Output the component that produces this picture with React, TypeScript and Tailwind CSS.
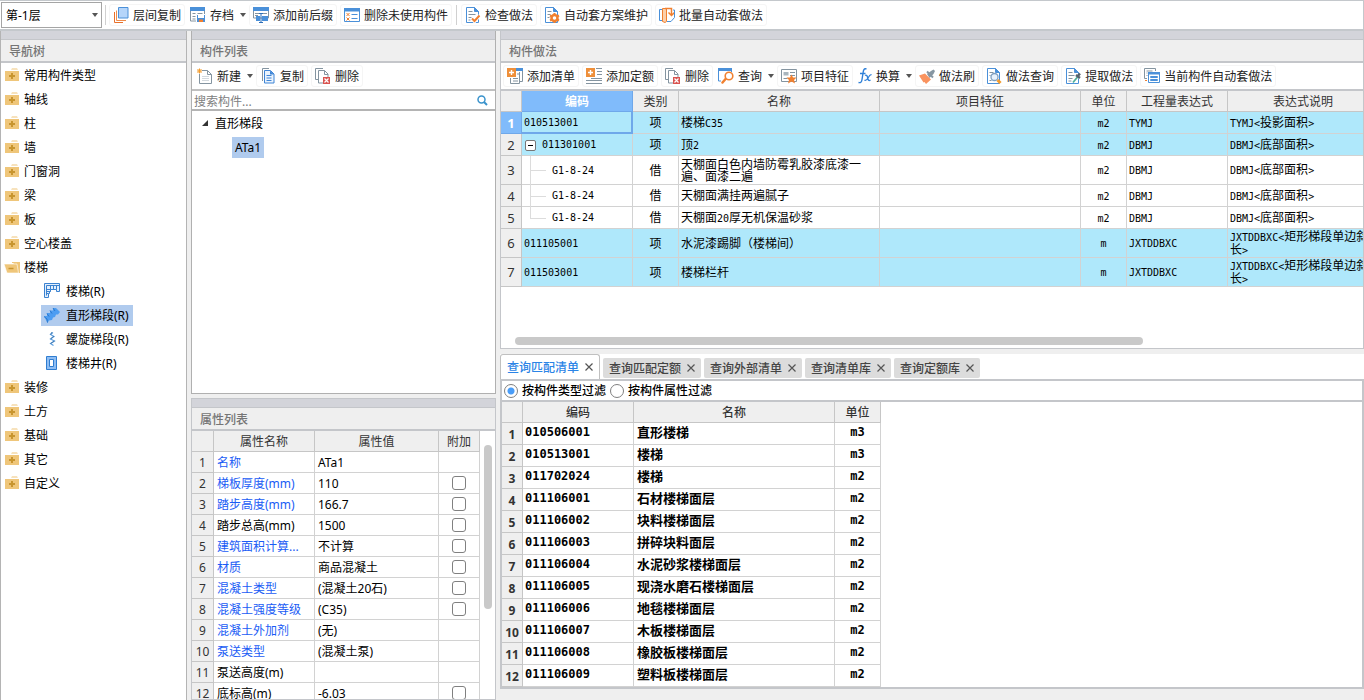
import React, { ReactNode, useState } from 'react'

interface IconProps {
  children: ReactNode
  width?: number
}

const Icon = ({ children, width = 16 }: IconProps) => (
  <svg width={width} height="16" viewBox={`0 0 ${width} 16`} fill="none" className="shrink-0" aria-hidden="true">
    {children}
  </svg>
)

const BLUE = '#4a90d9'
const SLATE = '#8494a0'
const ORANGE = '#f08030'

/* shared icon parts */
const Page = ({ color = BLUE }: { color?: string }) => (
  <>
    <path d="M1.5.5h8l4 4v11h-12z" fill="#fff" stroke={color} />
    <path d="M9.5.5v4h4z" fill={color} stroke={color} />
  </>
)

const RedCross = () => (
  <>
    <path d="M8 9h7v7H8z" fill="#d9534f" />
    <path d="M9.5 10.5l4 4m0-4l-4 4" stroke="#fff" strokeWidth="1.2" />
  </>
)

const PlusBox = () => (
  <>
    <path d="M0 0h9v9H0z" fill="#ee8f3a" />
    <path d="M4.5 2v5M2 4.5h5" stroke="#fff" strokeWidth="1.4" />
  </>
)

const LayerCopyIcon = () => (
  <Icon>
    <path d="M1.5 5v10.5H10" stroke="#e8702a" />
    <path d="M3.5 3.5v10H13" stroke="#ee8c4c" />
    <path d="M5.500 .5h9.500v10.500h-9.500z" fill="#b5d5fa" stroke={BLUE} />
  </Icon>
)

const ArchiveIcon = () => (
  <Icon>
    <path d="M.5 1.500h14V14H.5z" fill="#fff" stroke={SLATE} />
    <path d="M0 0h15v4H0z" fill={BLUE} />
    <path d="M2.500 6.500h3m2 0h5M2.500 9.500h3M2.500 12h3" stroke={SLATE} />
    <path d="M6.500 7.500h9V15.500h-9z" fill={BLUE} stroke="#fff" />
    <path d="M8 8h6v3H8z" fill="#fff" />
    <path d="M9 12.500h4V15H9z" fill="#f08030" />
  </Icon>
)

const SuffixIcon = () => (
  <Icon>
    <path d="M.5 1.500h15V11H.5z" fill="#fff" stroke={SLATE} />
    <path d="M0 0h16v4H0z" fill={BLUE} />
    <path d="M2 6.500h4M2 8.500h3m5-2h4" stroke={SLATE} />
    <path d="M3 9h4v5H3zm6 0h6v5H9z" fill={BLUE} />
    <path d="M8 6.500v9M6 6.500h4M6 15.500h4" stroke="#2d6fb8" />
  </Icon>
)

const DeleteUnusedIcon = () => (
  <Icon>
    <path d="M.5 1.500h15v13H.5z" fill="#fff" stroke={BLUE} />
    <path d="M0 1h16v3.500H0z" fill={BLUE} />
    <path d="M7.500 7.500h6m-6 4h6" stroke={BLUE} />
    <path d="M2.500 6l3 3m0-3l-3 3m0 1.500l3 3m0-3l-3 3" stroke={ORANGE} />
  </Icon>
)

const CheckIcon = () => (
  <Icon>
    <Page />
    <path d="M3.500 4.500h4m-4 3h7m-7 3h3m-3 2.500h2" stroke={SLATE} />
    <path d="M7 11.500l2.500 2.500L14.500 8.500" stroke="#fff" strokeWidth="4" />
    <path d="M7 11.500l2.500 2.500L14.500 8.500" stroke={ORANGE} strokeWidth="2" />
  </Icon>
)

const GearPageIcon = () => (
  <Icon>
    <Page />
    <path d="M3.500 4.500h4m-4 3h3m-3 3h2" stroke={SLATE} />
    <circle cx="10.500" cy="11" r="3" fill="#fff" stroke={ORANGE} strokeWidth="2.500" />
    <path d="M10.500 6v2m0 6v2M6 8.500l2 1m5 3l2 1m0-5l-2 1m-5 3l-2 1" stroke={ORANGE} strokeWidth="2" />
  </Icon>
)

const BatchIcon = () => (
  <Icon>
    <path d="M3 2.500H.5v11H3" stroke={BLUE} />
    <path d="M3.500 1.500h4v13l-1.500 1-2.500-1z" fill="#fbd0ab" stroke={ORANGE} />
    <path d="M6 1.500h6.500v6M9.500 5.500l3 3 3-3" stroke={ORANGE} strokeWidth="1.500" />
    <path d="M8 14.500h4l3.500-4V3H14" stroke={BLUE} />
  </Icon>
)

const NewIcon = () => (
  <Icon>
    <path d="M2.500 2.500h8l4 4v9h-12z" fill="#fff" stroke={SLATE} />
    <path d="M10.500 2.500v4h4" stroke={SLATE} />
    <path d="M5 8.500h7M5 10.500h7M5 12.500h7" stroke="#d3d9de" />
    <path d="M0 1h5v5H0z" fill="#fff" />
    <path d="M2.500 .5v5M0 3h5M.5 1l4 4m0-4l-4 4" stroke="#f39b2d" />
  </Icon>
)

const CopyIcon = () => (
  <Icon>
    <path d="M9 .5H2.500v12.500" stroke={SLATE} />
    <path d="M4.500 2.500h6l3.500 3.500v9H4.500z" fill="#eaf3fd" stroke="#3f85d6" />
    <path d="M10 2.500v4h4z" fill="#3f85d6" />
    <path d="M6.500 7.500h5m-5 2.500h5m-5 2.500h5" stroke="#3f85d6" />
  </Icon>
)

const DeleteIcon = () => (
  <Icon>
    <path d="M8 .5H.5v11H3" stroke={SLATE} />
    <path d="M3.500 2.500h6l3.500 3.500v9H3.500z" fill="#fff" stroke={SLATE} />
    <path d="M9.500 2.500v4H13" stroke={SLATE} />
    <RedCross />
  </Icon>
)

const AddListIcon = () => (
  <Icon>
    <path d="M10 1.500h5.500v12H13M3.500 10v5.500h9V4" fill="#fff" stroke={SLATE} />
    <path d="M9 0h7v3H9z" fill={BLUE} />
    <path d="M10 6h2m-6 4.500h5m-5 2.500h5" stroke={SLATE} />
    <PlusBox />
  </Icon>
)

const AddQuotaIcon = () => (
  <Icon>
    <path d="M10 .5h6m-5 3h5m-5 3h5M5 10.500h11M0 12.500h16M0 15.500h16" stroke={SLATE} />
    <PlusBox />
  </Icon>
)

const QueryIcon = () => (
  <Icon>
    <path d="M.5 1v12H3M13.500 1v3" stroke={BLUE} />
    <path d="M0 0h14v3H0z" fill={BLUE} />
    <path d="M8 10.500L4.500 14.500" stroke={ORANGE} strokeWidth="2.500" strokeLinecap="round" />
    <circle cx="11" cy="8" r="3.800" fill="#fff" stroke={ORANGE} strokeWidth="1.600" />
  </Icon>
)

const FeatureIcon = () => (
  <Icon>
    <path d="M.5 1.500h15v12H.5z" fill="#fff" stroke={SLATE} />
    <path d="M2.500 4h5v3.500h-5z" fill="#a9b5bd" />
    <path d="M9 4.500h5m-5 3h5M2.500 10.500h4" stroke={SLATE} />
    <path d="M10.500 6.500l1.500 3h3.500l-2.500 2.500 1 3.500-3.500-2-3.500 2 1-3.500L5.500 9.500H9z" fill={ORANGE} />
  </Icon>
)

const FxIcon = () => (
  <Icon width={14}>
    <path d="M8.500 1C6.500 0 5.500 1.500 5.200 4L4 11.500c-.4 2.800-1.500 3.500-3.500 3M2 5.500h5.500" stroke="#2f80d8" strokeWidth="1.400" />
    <path d="M7 7.500c1.500-1 2.200.2 2.700 2.500s1 3.200 2.800 2M13.500 6.800c-1.500-.6-2.700 1.700-3.500 3.200s-1.800 2.800-3.500 2.200" stroke="#2f80d8" strokeWidth="1.300" />
  </Icon>
)

const BrushIcon = () => (
  <Icon>
    <path d="M8 6l4-3 2.500-1.500L16 3l-1.500 3-4 4z" fill="#8696a2" />
    <path d="M8 3.500l6 6" stroke="#8696a2" strokeWidth="2" />
    <path d="M0 7.500L6 5.500l6 6-5 4.500-1.500-2-1 .5z" fill="#f9935f" />
  </Icon>
)

const PageSearchIcon = () => (
  <Icon>
    <Page />
    <path d="M3.500 4.500h4m-4 3h1m-1 5h2" stroke={SLATE} />
    <circle cx="8.500" cy="9" r="3.500" fill="#e8f2fd" stroke="#7f9fc0" strokeWidth="1.300" />
    <path d="M11.500 12l3 3" stroke="#f39b2d" strokeWidth="3" />
  </Icon>
)

const ExtractIcon = () => (
  <Icon>
    <Page />
    <path d="M3.500 4.500h4m-4 3h6m-6 3h4m-4 2.500h3" stroke={SLATE} />
    <path d="M8 14l5-6" stroke="#fff" strokeWidth="4" />
    <path d="M8 14.500l4.500-5.500" stroke="#4fb09a" strokeWidth="1.800" />
    <path d="M11 7l4 3M12.500 8.500L15 5.500" stroke="#55626d" strokeWidth="2.400" />
  </Icon>
)

const AutoIcon = () => (
  <Icon>
    <path d="M3 10.500H.5v-10h11V3" stroke={SLATE} />
    <path d="M2.500 3h6m-6 2h1m-1 2.500h1" stroke={SLATE} />
    <path d="M1 12.500h2" stroke={ORANGE} />
    <path d="M4.500 4.500h11v10h-11z" fill="#fff" stroke={BLUE} />
    <path d="M4 4h12v2.500H4z" fill={BLUE} />
    <path d="M6.500 8.500h7v1h-7zm0 3h7v1h-7z" fill="#fff" stroke={BLUE} />
  </Icon>
)

const FolderIcon = () => (
  <Icon>
    <path d="M7 2.500l1-1h5l1 1z" fill="#efc67a" />
    <path d="M1 4h14v10H1z" fill="#efc67a" />
    <path d="M8 6v6M5 9h6" stroke="#c8952f" strokeWidth="2" />
  </Icon>
)

const OpenFolderIcon = () => (
  <Icon>
    <path d="M9 3h7v11h-3z" fill="#efc67a" />
    <path d="M8 3.500h7.500V13" stroke="#efc67a" />
    <path d="M0 5h13l1.500 9H3z" fill="#efc67a" stroke="#fff" strokeWidth=".6" />
    <path d="M4.500 9.500h5" stroke="#c8952f" strokeWidth="1.500" />
  </Icon>
)

const StairIcon = () => (
  <Icon>
    <path d="M.5 14.500V.5h15v8h-3v-2h-6v2h-1v2h-1v4z" fill="#e3effc" stroke="#3b82d0" />
    <path d="M2.500 12.500v-10h13M6.500 2.500v4m3-4v4m3-4v4M2.500 6.500h4m-4 2h4m-4 2h2" stroke="#3b82d0" />
  </Icon>
)

const FlightIcon = () => (
  <Icon>
    <path d="M0 9h3V6h3V3.500h3V1h3l4 4-2 2.500h-2L11 10l-2 .5-1 2.500-3 .5L3.500 16z" fill="#4d9df2" />
    <path d="M3 6.500l2 3m1-6l2 3m1-5.500l2 3M0 9.500l3 2.500.5 3.500" stroke="#2b78cc" />
  </Icon>
)

const SpiralIcon = () => (
  <Icon>
    <path d="M9 1.500L6.500 3.500 10 5.500 6.500 8l4 2-4 2.500 3 2" stroke="#5fa0e0" strokeWidth="1.200" />
    <path d="M8 1l-1.500 2.500M10 5l-3.500 3M10.500 10l-4 2.500" stroke="#3b6f9f" strokeWidth=".8" />
  </Icon>
)

const WellIcon = () => (
  <Icon>
    <path d="M2.500 1.500h10v13h-10z" fill="#8ebdf3" stroke="#2f7dd1" />
    <path d="M5.500 4.500h4v7h-4z" fill="#fff" stroke="#2f7dd1" />
  </Icon>
)

const Caret = () => (
  <svg width="6" height="4" viewBox="0 0 6 4" className="block shrink-0" aria-hidden="true">
    <path d="M0 0h6L3 4z" fill="#555" />
  </svg>
)

const CloseMark = () => (
  <svg width="8" height="8" viewBox="0 0 8 8" className="shrink-0" aria-hidden="true">
    <path d="M.5.5l7 7m0-7l-7 7" stroke="#555" strokeWidth="1.200" />
  </svg>
)

interface ToolProps {
  icon: ReactNode
  label: string
  dropdown?: boolean
}

const Tool = ({ icon, label, dropdown }: ToolProps) => (
  <button
    type="button"
    className={
      dropdown
        ? 'flex h-[22px] items-center gap-1 whitespace-nowrap pl-0.5 text-[#222]'
        : 'flex h-[22px] items-center gap-1 whitespace-nowrap rounded-[3px] border border-[#f5f5f5] px-[3px] text-[#222]'
    }
  >
    {icon}
    <span className="pt-0.5">{label}</span>
    {dropdown && (
      <span className="pl-0.5">
        <Caret />
      </span>
    )}
  </button>
)

const PanelTitle = ({ children }: { children: string }) => (
  <>
    <div className="h-2 shrink-0 bg-[#d3d4da]" />
    <h2 className="h-6 shrink-0 border-b-2 border-t border-[#c4c6ca] bg-[#efefef] pl-2 font-medium leading-[23px] text-[#757575]">
      {children}
    </h2>
  </>
)

// Half-width characters sit on a grid half as wide as the Chinese ones
const GridText = ({ text, bold }: { text: string; bold?: boolean }) => (
  <>
    {text.split(/([\x20-\x7e]+)/).map((part, i) =>
      i % 2 ? (
        <span key={i} className={bold ? 'font-[DejaVu_Sans_Mono] text-[12px]' : 'font-[DejaVu_Sans_Mono] text-[10px]'}>
          {part}
        </span>
      ) : (
        part
      )
    )}
  </>
)

const folders = ['常用构件类型', '轴线', '柱', '墙', '门窗洞', '梁', '板', '空心楼盖', '楼梯', '装修', '土方', '基础', '其它', '自定义']

const stairs = [
  { label: '楼梯(R)', icon: <StairIcon /> },
  { label: '直形梯段(R)', icon: <FlightIcon /> },
  { label: '螺旋梯段(R)', icon: <SpiralIcon /> },
  { label: '楼梯井(R)', icon: <WellIcon /> },
]

const properties = [
  { name: '名称', value: 'ATa1', link: true, check: false },
  { name: '梯板厚度(mm)', value: '110', link: true, check: true },
  { name: '踏步高度(mm)', value: '166.7', link: true, check: true },
  { name: '踏步总高(mm)', value: '1500', link: false, check: true },
  { name: '建筑面积计算...', value: '不计算', link: true, check: true },
  { name: '材质', value: '商品混凝土', link: true, check: true },
  { name: '混凝土类型', value: '(混凝土20石)', link: true, check: true },
  { name: '混凝土强度等级', value: '(C35)', link: true, check: true },
  { name: '混凝土外加剂', value: '(无)', link: true, check: false },
  { name: '泵送类型', value: '(混凝土泵)', link: true, check: false },
  { name: '泵送高度(m)', value: '', link: false, check: false },
  { name: '底标高(m)', value: '-6.03', link: false, check: true },
]

const methods = [
  { code: '010513001', kind: '项', name: '楼梯C35', unit: 'm2', expr: 'TYMJ', note: 'TYMJ<投影面积>' },
  { code: '011301001', kind: '项', name: '顶2', unit: 'm2', expr: 'DBMJ', note: 'DBMJ<底部面积>' },
  { code: 'G1-8-24', kind: '借', name: '天棚面白色内墙防霉乳胶漆底漆一遍、面漆二遍', unit: 'm2', expr: 'DBMJ', note: 'DBMJ<底部面积>', tall: true },
  { code: 'G1-8-24', kind: '借', name: '天棚面满挂两遍腻子', unit: 'm2', expr: 'DBMJ', note: 'DBMJ<底部面积>' },
  { code: 'G1-8-24', kind: '借', name: '天棚面20厚无机保温砂浆', unit: 'm2', expr: 'DBMJ', note: 'DBMJ<底部面积>' },
  { code: '011105001', kind: '项', name: '水泥漆踢脚（楼梯间）', unit: 'm', expr: 'JXTDDBXC', note: 'JXTDDBXC<矩形梯段单边斜长>', tall: true },
  { code: '011503001', kind: '项', name: '楼梯栏杆', unit: 'm', expr: 'JXTDDBXC', note: 'JXTDDBXC<矩形梯段单边斜长>', tall: true },
]

const matches = [
  ['010506001', '直形楼梯', 'm3'],
  ['010513001', '楼梯', 'm3'],
  ['011702024', '楼梯', 'm2'],
  ['011106001', '石材楼梯面层', 'm2'],
  ['011106002', '块料楼梯面层', 'm2'],
  ['011106003', '拼碎块料面层', 'm2'],
  ['011106004', '水泥砂浆楼梯面层', 'm2'],
  ['011106005', '现浇水磨石楼梯面层', 'm2'],
  ['011106006', '地毯楼梯面层', 'm2'],
  ['011106007', '木板楼梯面层', 'm2'],
  ['011106008', '橡胶板楼梯面层', 'm2'],
  ['011106009', '塑料板楼梯面层', 'm2'],
]

const tabs = ['查询匹配清单', '查询匹配定额', '查询外部清单', '查询清单库', '查询定额库']

const TopBar = () => (
  <div className="flex h-[31px] shrink-0 items-center gap-[3px] border-b-2 border-r border-t border-[#c4c8cc] bg-white pl-px">
    <div className="relative">
      <select
        aria-label="楼层"
        className="block h-[26px] w-[101px] appearance-none border border-[#a5a5a5] bg-white pl-1 pt-0.5 text-black outline-none"
      >
        <option>第-1层</option>
      </select>
      <span className="pointer-events-none absolute right-1 top-1/2 -translate-y-1/2">
        <Caret />
      </span>
    </div>
    <span className="h-5 w-px bg-[#d0d0d0]" />
    <Tool icon={<LayerCopyIcon />} label="层间复制" />
    <Tool icon={<ArchiveIcon />} label="存档" dropdown />
    <Tool icon={<SuffixIcon />} label="添加前后缀" />
    <Tool icon={<DeleteUnusedIcon />} label="删除未使用构件" />
    <span className="mx-px h-5 w-px bg-[#d0d0d0]" />
    <Tool icon={<CheckIcon />} label="检查做法" />
    <Tool icon={<GearPageIcon />} label="自动套方案维护" />
    <Tool icon={<BatchIcon />} label="批量自动套做法" />
  </div>
)

const NavTree = () => {
  const [selected, setSelected] = useState('直形梯段(R)')

  return (
    <nav className="flex w-[187px] shrink-0 flex-col border-x border-[#b4b4b4] bg-white">
      <PanelTitle>导航树</PanelTitle>
      <ul>
        {folders.map((folder) => (
          <li key={folder}>
            <button type="button" className="flex h-6 items-center gap-1 pl-[3px] text-black">
              {folder === '楼梯' ? <OpenFolderIcon /> : <FolderIcon />}
              <span className="pt-0.5">{folder}</span>
            </button>
            {folder === '楼梯' && (
              <ul className="pl-10">
                {stairs.map((s) => (
                  <li key={s.label} className="flex h-6 items-center">
                    <button
                      type="button"
                      onClick={() => setSelected(s.label)}
                      className={
                        s.label === selected
                          ? 'flex h-[21px] items-center gap-1.5 bg-[#b0cbee] pl-[3px] pr-1 text-black'
                          : 'flex h-[21px] items-center gap-1.5 pl-[3px] pr-1 text-black'
                      }
                    >
                      {s.icon}
                      <span className="pt-0.5">{s.label}</span>
                    </button>
                  </li>
                ))}
              </ul>
            )}
          </li>
        ))}
      </ul>
    </nav>
  )
}

const ComponentList = () => (
  <section className="flex min-h-0 flex-[362_1_0%] flex-col border-x border-b border-[#b0b0b0] bg-white">
    <PanelTitle>构件列表</PanelTitle>
    <div className="flex h-7 shrink-0 items-center gap-[3px] border-b-2 border-[#c0c0c0] pl-[3px]">
      <Tool icon={<NewIcon />} label="新建" dropdown />
      <Tool icon={<CopyIcon />} label="复制" />
      <Tool icon={<DeleteIcon />} label="删除" />
    </div>
    <div className="flex h-5 shrink-0 items-center border-b-2 border-[#b4b4b4] pl-0.5 pr-[7px]">
      <input
        type="text"
        aria-label="搜索构件"
        placeholder="搜索构件..."
        className="h-[18px] min-w-0 flex-1 pt-0.5 text-black outline-none placeholder:text-[#808080]"
      />
      <svg width="11" height="11" viewBox="0 0 11 11" fill="none" aria-hidden="true">
        <circle cx="4.500" cy="4.500" r="3.500" stroke="#3a93cc" strokeWidth="1.500" />
        <path d="M7 7l3 3" stroke="#3a93cc" strokeWidth="2" />
      </svg>
    </div>
    <ul>
      <li>
        <button type="button" className="flex h-6 items-center gap-1.5 pl-2.5 text-black">
          <svg width="7" height="7" viewBox="0 0 7 7" aria-hidden="true">
            <path d="M6 0v6H0z" fill="#333" />
          </svg>
          <span className="pt-0.5">直形梯段</span>
        </button>
        <ul className="pl-10">
          <li className="flex h-6 items-center">
            <button type="button" className="h-[21px] bg-[#b0cbee] px-[3px] pt-0.5 text-black">
              ATa1
            </button>
          </li>
        </ul>
      </li>
    </ul>
  </section>
)

const PropertyList = () => (
  <section className="flex min-h-0 flex-[300_1_0%] flex-col overflow-hidden border border-[#c4c6ca] bg-white">
    <PanelTitle>属性列表</PanelTitle>
    <div className="flex min-h-0 flex-1 overflow-hidden">
      <table className="w-[288px] table-fixed border-separate border-spacing-0 self-start">
        <colgroup>
          <col className="w-[22px]" />
          <col className="w-[101px]" />
          <col className="w-[124px]" />
          <col className="w-[41px]" />
        </colgroup>
        <thead>
          <tr className="h-[21px] bg-[#efefef] text-[#333]">
            <th className="border-b border-r border-[#c6c6c6] p-0" />
            {['属性名称', '属性值', '附加'].map((h) => (
              <th key={h} className="border-b border-r border-[#c6c6c6] p-0 pt-0.5 font-normal">
                {h}
              </th>
            ))}
          </tr>
        </thead>
        <tbody>
          {properties.map((p, i) => (
            <tr key={p.name} className="h-[21px] text-black">
              <td className="border-b border-r border-[#c6c6c6] bg-[#efefef] p-0 pt-0.5 text-center text-[#333]">{i + 1}</td>
              <td
                className={
                  p.link
                    ? 'border-b border-r border-[#d2d2d2] p-0 pl-[3px] pt-0.5 text-[#1a5cf5]'
                    : 'border-b border-r border-[#d2d2d2] p-0 pl-[3px] pt-0.5'
                }
              >
                {p.name}
              </td>
              <td className="border-b border-r border-[#d2d2d2] p-0 pl-[3px] pt-0.5">{p.value}</td>
              <td className="border-b border-r border-[#d2d2d2] p-0">
                {p.check && (
                  <input
                    type="checkbox"
                    aria-label={p.name}
                    className="mx-auto block size-3.5 appearance-none rounded-[3px] border border-[#808080] bg-white checked:bg-[#4a9df8]"
                  />
                )}
              </td>
            </tr>
          ))}
        </tbody>
      </table>
      <div className="flex-1 px-1 pt-3.5">
        <div className="mx-auto h-[164px] w-2 rounded-full bg-[#c9c9c9]" />
      </div>
    </div>
  </section>
)

const MethodTable = () => (
  <table className="w-[878px] table-fixed border-separate border-spacing-0">
    <colgroup>
      <col className="w-[21px]" />
      <col className="w-[111px]" />
      <col className="w-[46px]" />
      <col className="w-[201px]" />
      <col className="w-[201px]" />
      <col className="w-[46px]" />
      <col className="w-[101px]" />
      <col className="w-[151px]" />
    </colgroup>
    <thead>
      <tr className="h-[21px] bg-[#efefef] text-[#333]">
        <th className="border-b border-r border-[#c6c6c6] p-0" />
        <th className="border-b border-r border-[#6fa8ea] bg-[#80bbfb] p-0 pt-0.5 font-bold text-white">编码</th>
        {['类别', '名称', '项目特征', '单位', '工程量表达式', '表达式说明'].map((h) => (
          <th key={h} className="border-b border-r border-[#c6c6c6] p-0 pt-0.5 font-normal">
            {h}
          </th>
        ))}
      </tr>
    </thead>
    <tbody className="leading-3 text-black">
      {methods.map((m, i) => {
        const child = m.kind === '借'
        const cell = 'border-b border-r border-[#d2d2d2] pb-0 pl-0.5 pr-0 pt-px'
        return (
          <tr key={i} className={`${m.tall ? 'h-[29px]' : 'h-[22px]'} ${child ? 'bg-white' : 'bg-[#afe8fb]'}`}>
            <td
              className={
                i === 0
                  ? 'border-b border-r border-[#6fa8ea] bg-[#80bbfb] p-0 text-center text-[13px] font-bold text-white'
                  : 'border-b border-r border-[#c6c6c6] bg-[#efefef] p-0 text-center text-[13px] text-[#333]'
              }
            >
              {i + 1}
            </td>
            <td className={i === 0 ? 'border-b-2 border-r-2 border-[#6fa8ea] pb-0 pl-0.5 pr-0 pt-0.5' : `relative ${cell}`}>
              {child && (
                <>
                  <span className={i === 4 ? 'absolute left-2 top-0 h-1/2 w-px bg-[#dcdcdc]' : 'absolute -bottom-px left-2 top-0 w-px bg-[#dcdcdc]'} />
                  <span className="absolute left-2 top-1/2 h-px w-4 bg-[#dcdcdc]" />
                </>
              )}
              <span className={child ? 'flex items-center pl-7' : 'flex items-center'}>
                {i === 1 && (
                  <button
                    type="button"
                    aria-label="折叠"
                    className="ml-px mr-1.5 flex size-[11px] items-center justify-center rounded-[2px] border border-[#777] bg-white"
                  >
                    <span className="h-px w-[5px] bg-black" />
                  </button>
                )}
                <GridText text={m.code} />
              </span>
            </td>
            <td className="border-b border-r border-[#d2d2d2] p-0 pt-px text-center">{m.kind}</td>
            <td className={cell}>
              <GridText text={m.name} />
            </td>
            <td className={cell} />
            <td className="border-b border-r border-[#d2d2d2] p-0 pt-px text-center">
              <GridText text={m.unit} />
            </td>
            <td className={cell}>
              <GridText text={m.expr} />
            </td>
            <td className={`${cell} break-all`}>
              <GridText text={m.note} />
            </td>
          </tr>
        )
      })}
    </tbody>
  </table>
)

const MethodPanel = () => (
  <section className="flex min-h-0 flex-1 flex-col overflow-hidden border-x border-b border-[#c4c6ca] bg-white">
    <PanelTitle>构件做法</PanelTitle>
    <div className="flex h-7 shrink-0 items-center gap-[3px] overflow-hidden border-b-2 border-[#c4c6ca] pl-0.5">
      <Tool icon={<AddListIcon />} label="添加清单" />
      <Tool icon={<AddQuotaIcon />} label="添加定额" />
      <Tool icon={<DeleteIcon />} label="删除" />
      <Tool icon={<QueryIcon />} label="查询" dropdown />
      <Tool icon={<FeatureIcon />} label="项目特征" />
      <Tool icon={<FxIcon />} label="换算" dropdown />
      <Tool icon={<BrushIcon />} label="做法刷" />
      <Tool icon={<PageSearchIcon />} label="做法查询" />
      <Tool icon={<ExtractIcon />} label="提取做法" />
      <Tool icon={<AutoIcon />} label="当前构件自动套做法" />
    </div>
    <div className="min-h-0 flex-1 overflow-hidden">
      <MethodTable />
    </div>
    <div className="shrink-0 pb-[3px] pl-3.5">
      <div className="h-2 w-[74%] rounded-full bg-[#c9c9c9]" />
    </div>
  </section>
)

const QueryPanel = () => {
  const [active, setActive] = useState(tabs[0])
  const [filter, setFilter] = useState('按构件类型过滤')

  return (
    <section className="shrink-0 bg-white">
      <div className="flex items-end gap-[3px]" role="tablist">
        {tabs.map((tab) => (
          <button
            key={tab}
            type="button"
            role="tab"
            aria-selected={tab === active}
            onClick={() => setActive(tab)}
            className={
              tab === active
                ? 'flex h-[25px] items-center gap-1.5 rounded-t-[3px] border-x border-t border-[#c0c0c0] bg-white px-1.5 font-medium text-[#2b84e6]'
                : 'mb-px flex h-5 items-center gap-1.5 rounded-[2px] bg-[#dcdcdc] px-1.5 font-medium text-[#444]'
            }
          >
            <span className="pt-0.5">{tab}</span>
            <CloseMark />
          </button>
        ))}
      </div>
      <div className="border-2 border-[#c4c6ca]">
        <div className="flex h-[21px] items-center gap-1 border-b-2 border-[#c4c6ca] pl-0.5">
          {['按构件类型过滤', '按构件属性过滤'].map((f) => (
            <label key={f} className="flex items-center gap-1 font-medium text-black">
              <input
                type="radio"
                name="filter"
                checked={f === filter}
                onChange={() => setFilter(f)}
                className="size-3.5 appearance-none rounded-full border border-[#808080] bg-white bg-[radial-gradient(circle,#4a9df8_0_3px,transparent_4px)] not-checked:bg-none"
              />
              {f}
            </label>
          ))}
        </div>
        <table className="w-[379px] table-fixed border-separate border-spacing-0">
          <colgroup>
            <col className="w-[21px]" />
            <col className="w-[111px]" />
            <col className="w-[201px]" />
            <col className="w-[46px]" />
          </colgroup>
          <thead>
            <tr className="h-[21px] bg-[#efefef] text-[#333]">
              <th className="border-b border-r border-[#c6c6c6] p-0" />
              {['编码', '名称', '单位'].map((h) => (
                <th key={h} className="border-b border-r border-[#c6c6c6] p-0 pt-0.5 font-medium">
                  {h}
                </th>
              ))}
            </tr>
          </thead>
          <tbody className="text-[13px] font-bold text-black">
            {matches.map(([code, name, unit], i) => (
              <tr key={code} className="h-[22px]">
                <td className="border-b border-r border-[#c6c6c6] bg-[#efefef] p-0 pt-0.5 text-center text-[12px] text-[#333]">{i + 1}</td>
                <td className="border-b border-r border-[#d2d2d2] p-0 pb-1 pl-0.5">
                  <GridText text={code} bold />
                </td>
                <td className="border-b border-r border-[#d2d2d2] p-0 pb-1 pl-[3px]">{name}</td>
                <td className="border-b border-r border-[#d2d2d2] p-0 pb-1 text-center">
                  <GridText text={unit} bold />
                </td>
              </tr>
            ))}
          </tbody>
        </table>
      </div>
    </section>
  )
}

const App = () => {
  return (
    <div className="flex h-screen flex-col overflow-hidden bg-[#efefef] font-['Noto_Sans','Noto_Sans_CJK_SC',sans-serif] text-[12px] leading-4">
      <TopBar />
      <main className="flex min-h-0 flex-1 gap-1">
        <NavTree />
        <div className="flex w-[305px] shrink-0 flex-col gap-1">
          <ComponentList />
          <PropertyList />
        </div>
        <div className="flex min-w-0 flex-1 flex-col gap-[5px] pb-[11px]">
          <MethodPanel />
          <QueryPanel />
        </div>
      </main>
    </div>
  )
}

export default App
